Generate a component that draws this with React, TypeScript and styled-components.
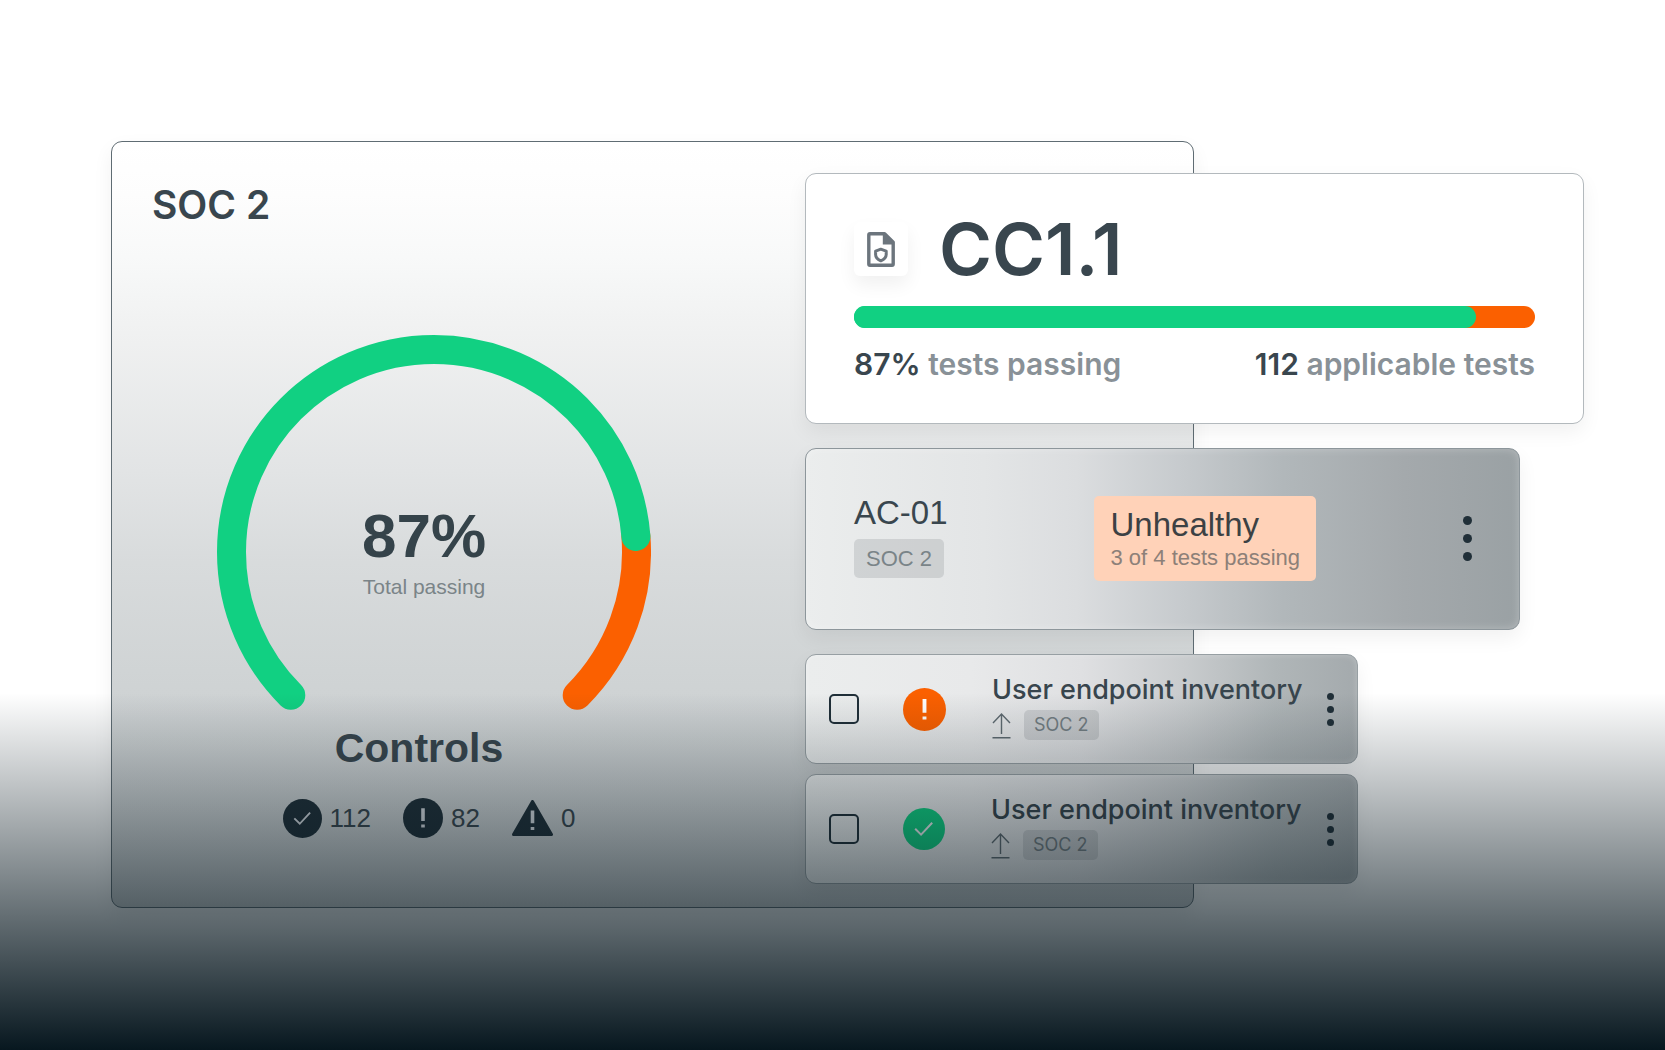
import React from "react";
import styled, { createGlobalStyle } from "styled-components";

const inter = `Inter, "Liberation Sans", sans-serif`;
const grotesk = `"Liberation Sans", Arial, sans-serif`;

const color = {
  ink: "#39464e",
  deep: "#202f38",
  muted: "#899197",
  soft: "#7a8488",
  green: "#11d082",
  orange: "#fb6000",
  line: "#5f6c73",
};

const GlobalStyle = createGlobalStyle`
  *, *::before, *::after { box-sizing: border-box; }
  body { margin: 0; background: #fff; }
  h1, h2, p, ul { margin: 0; padding: 0; font-weight: inherit; }
`;

const Page = styled.main`
  position: relative;
  min-height: 100vh;
  padding: 141px 81px 141px 111px;
  background: #fff;
  color: ${color.ink};
  font-family: ${inter};

  &::after {
    content: "";
    position: absolute;
    inset: 0;
    pointer-events: none;
    background: linear-gradient(180deg, rgba(7, 23, 31, 0) 66%, rgb(7, 23, 31) 100%);
  }
`;

const Stage = styled.div`
  display: grid;
  grid-template-columns: 694fr 389fr 390fr;
`;

const Panel = styled.section`
  grid-area: 1 / 1 / 2 / 3;
  padding: 39px 40px 69px;
  border: 1px solid ${color.line};
  border-radius: 11px;
  background: linear-gradient(
    180deg,
    #ffffff 0%,
    #fdfdfd 7%,
    #f8f9f9 15%,
    #f0f1f1 25%,
    #e2e4e5 43%,
    #d8dbdc 55%,
    #cfd3d4 71%,
    #c9cdcf 100%
  );
  box-shadow: 0 8px 20px rgba(0, 0, 0, 0.06);
`;

const PanelTitle = styled.h1`
  font-size: 39px;
  line-height: 48px;
  font-weight: 600;
`;

const Summary = styled.div`
  width: 434px;
  margin: 106px 0 0 65px;
`;

const Gauge = styled.div`
  display: grid;

  > * {
    grid-area: 1 / 1;
  }
`;

const GaugeLabel = styled.div`
  padding: 169px 20px 0 0;
  font-family: ${grotesk};
  text-align: center;
`;

const GaugeValue = styled.p`
  font-size: 62px;
  line-height: 64px;
  font-weight: 700;
  color: #35434a;
`;

const GaugeCaption = styled.p`
  margin-top: 5px;
  font-size: 21px;
  line-height: 28px;
  color: ${color.soft};
`;

const ControlsTitle = styled.h2`
  margin-top: 13px;
  padding-right: 30px;
  font-family: ${grotesk};
  font-size: 41px;
  line-height: 48px;
  font-weight: 700;
  text-align: center;
`;

const Counts = styled.ul`
  display: flex;
  justify-content: center;
  gap: 32px;
  margin-top: 26px;
  padding-right: 10px;
  list-style: none;
`;

const Count = styled.li`
  display: flex;
  align-items: center;
  gap: 8px;
  font-family: ${grotesk};
  font-size: 26px;
  line-height: 40px;
`;

const Stack = styled.div`
  grid-area: 1 / 2 / 2 / 4;
  display: flex;
  flex-direction: column;
  gap: 24px;
  padding-top: 32px;
`;

const Card = styled.article`
  border: 1px solid #b3b9bd;
  border-radius: 11px;
  background: #fff;
  box-shadow: 0 8px 20px rgba(0, 0, 0, 0.06);
`;

const CriteriaCard = styled(Card)`
  padding: 48px 48px 41px;
`;

const CriteriaHead = styled.header`
  display: flex;
  align-items: center;
  gap: 31px;
  height: 54px;
`;

const IconTile = styled.span`
  display: grid;
  place-items: center;
  width: 54px;
  height: 54px;
  border-radius: 6px;
  background: #fff;
  box-shadow: 0 9px 18px rgba(0, 0, 0, 0.06);
`;

const CriteriaTitle = styled.h2`
  font-size: 72px;
  line-height: 54px;
  font-weight: 600;
`;

const Track = styled.div`
  height: 22px;
  margin-top: 30px;
  border-radius: 11px;
  background: linear-gradient(90deg, ${color.green} 50%, ${color.orange} 50%);
`;

const Fill = styled.div`
  height: 100%;
  border-radius: 11px;
  background: ${color.green};
`;

const Legend = styled.div`
  display: flex;
  justify-content: space-between;
  margin-top: 18px;
  font-size: 30px;
  line-height: 36px;
  font-weight: 600;
  color: ${color.muted};

  b {
    font-weight: 600;
    color: ${color.ink};
  }
`;

const ControlCard = styled(Card)`
  display: flex;
  align-items: center;
  justify-content: space-between;
  width: calc(100% - 64px);
  padding: 47px 47px 48px 48px;
  border-color: #8d969b;
  background: linear-gradient(
    90deg,
    #ebeded 0%,
    #e3e5e6 25%,
    #dbdddf 38%,
    #c6cacd 53%,
    #b1b7ba 67%,
    #a4a9ac 84%,
    #9aa1a4 100%
  );
  box-shadow: 0 8px 20px rgba(0, 0, 0, 0.06), inset 0 0 8px rgba(255, 255, 255, 0.28);
`;

const ControlName = styled.p`
  font-family: ${grotesk};
  font-size: 33px;
  line-height: 32px;
`;

const Tag = styled.span<{ $large?: boolean }>`
  display: inline-block;
  padding: ${(p) => (p.$large ? "0 12px" : "0 10px")};
  border-radius: 5px;
  background: rgba(32, 40, 46, 0.12);
  color: ${(p) => (p.$large ? "#7a8488" : "#737d82")};
  font-family: ${(p) => (p.$large ? grotesk : inter)};
  font-size: ${(p) => (p.$large ? 22 : 18)}px;
  line-height: ${(p) => (p.$large ? 39 : 30)}px;
`;

const ControlId = styled.div`
  display: flex;
  flex-direction: column;
  align-items: flex-start;
  gap: 10px;
  margin-bottom: 3px;
`;

const Health = styled.div`
  padding: 11px 16px 10px;
  border-radius: 5px;
  background: #ffd2b8;
  font-family: ${grotesk};
`;

const HealthState = styled.p`
  font-size: 33px;
  line-height: 36px;
  color: #3c4144;
`;

const HealthNote = styled.p`
  margin-top: 2px;
  font-size: 22px;
  line-height: 26px;
  color: #8d8078;
`;

const MenuButton = styled.button`
  display: block;
  flex: none;
  padding: 0;
  border: 0;
  background: none;
  cursor: pointer;

  svg {
    display: block;
  }
`;

const Tests = styled.div`
  display: flex;
  flex-direction: column;
  gap: 10px;
  width: calc(100% - 226px);
`;

const TestCard = styled(Card)`
  display: flex;
  align-items: center;
  padding: 18px 23px;
  border-color: #979fa3;
  background: linear-gradient(
    90deg,
    #ebeded 0%,
    #e8e9ea 30%,
    #dfe0e2 50%,
    #c8cbcd 69%,
    #b0b6b8 85%,
    #a4aaad 100%
  );
  box-shadow: 0 8px 20px rgba(0, 0, 0, 0.06), inset 0 0 6px rgba(255, 255, 255, 0.25);
`;

const Check = styled.input`
  appearance: none;
  flex: none;
  width: 30px;
  height: 30px;
  margin: 0;
  border: 2px solid ${color.deep};
  border-radius: 5px;
`;

const StatusSlot = styled.span`
  display: grid;
  flex: none;
  margin: 0 46px 0 44px;
`;

const TestBody = styled.div`
  flex: 1;
  margin-bottom: 5px;
  white-space: nowrap;
`;

const TestName = styled.p`
  font-size: 27px;
  line-height: 34px;
  font-weight: 500;
  color: #38454d;
`;

const TestMeta = styled.div`
  display: flex;
  align-items: center;
  gap: 13px;
  margin-top: 3px;
`;

function Ring({ share }: { share: number }) {
  const arc = "M 73.8 360.2 A 202.5 202.5 0 1 1 360.2 360.2";
  return (
    <svg width="434" height="376" viewBox="0 0 434 376" fill="none" aria-hidden="true">
      <g strokeWidth="29" strokeLinecap="round">
        <path d="M 418.9 201.5 A 202.5 202.5 0 0 1 360.2 360.2" stroke={color.orange} />
        <path d={arc} stroke={color.green} pathLength={100} strokeDasharray={`${share} 200`} />
      </g>
    </svg>
  );
}

function Badge({ kind, fill, mark, size }: { kind: "check" | "alert"; fill: string; mark: string; size: number }) {
  return (
    <svg width={size} height={size} viewBox="0 0 40 40" fill="none" aria-hidden="true">
      <circle cx="20" cy="20" r="20" fill={fill} />
      {kind === "check" ? (
        <path d="M11.6 19.8L17.2 25.4L27.8 14" stroke={mark} strokeWidth="1.9" />
      ) : (
        <path d="M18.2 10.2h3.6v12.8h-3.6zM18.2 26.4h3.6v3h-3.6z" fill={mark} />
      )}
    </svg>
  );
}

function Triangle() {
  return (
    <svg width="41" height="36" viewBox="0 0 41 36" aria-hidden="true">
      <path d="M20.5 1.5L39.5 34.5H1.5Z" fill={color.deep} stroke={color.deep} strokeWidth="3" strokeLinejoin="round" />
      <path d="M18.7 10.5h3.6v12.8h-3.6zM18.7 27h3.6v3h-3.6z" fill="#d9dde2" />
    </svg>
  );
}

function ShieldFile() {
  return (
    <svg width="28" height="35" viewBox="0 0 28 35" fill="none" aria-hidden="true">
      <path
        d="M3 1.8H17.6L26.2 10.2V32Q26.2 33.2 25 33.2H3Q1.8 33.2 1.8 32V3Q1.8 1.8 3 1.8Z"
        stroke="#6c757d"
        strokeWidth="3.4"
        strokeLinejoin="round"
      />
      <path d="M15.8 2V12.4H27V10L18.4 1.6Z" fill="#6c757d" />
      <path
        d="M13.8 17.2L19.2 19.1V22.4C19.2 25.2 17 27.4 13.8 28.8C10.6 27.4 8.6 25.2 8.6 22.4V19.1Z"
        stroke="#6c757d"
        strokeWidth="3"
        strokeLinejoin="round"
      />
    </svg>
  );
}

function Upload() {
  return (
    <svg width="19" height="27" viewBox="0 0 19 27" fill="none" stroke="#5f6a70" strokeWidth="1.4" aria-hidden="true">
      <path d="M9.5 22V2M1 11L9.5 2L18 11M0.5 25.8H18.5" />
    </svg>
  );
}

function Dots({ size, step }: { size: number; step: number }) {
  const r = size / 2;
  const h = size + step * 2;
  return (
    <svg width={size} height={h} viewBox={`0 0 ${size} ${h}`} fill={color.deep} aria-hidden="true">
      {[0, 1, 2].map((i) => (
        <circle key={i} cx={r} cy={r + i * step} r={r} />
      ))}
    </svg>
  );
}

const tests = [
  { id: "test-1", name: "User endpoint inventory", tag: "SOC 2", kind: "alert" as const, fill: color.orange, mark: "#ffffff", size: 43 },
  { id: "test-2", name: "User endpoint inventory", tag: "SOC 2", kind: "check" as const, fill: color.green, mark: "#eef1f2", size: 42 },
];

export default function App() {
  const passing = 91.3;
  return (
    <>
      <GlobalStyle />
      <Page>
        <Stage>
          <Panel>
            <PanelTitle>SOC 2</PanelTitle>
            <Summary>
              <Gauge>
                <Ring share={81.7} />
                <GaugeLabel>
                  <GaugeValue>87%</GaugeValue>
                  <GaugeCaption>Total passing</GaugeCaption>
                </GaugeLabel>
              </Gauge>
              <ControlsTitle>Controls</ControlsTitle>
              <Counts>
                <Count>
                  <Badge kind="check" fill={color.deep} mark="#d9dde2" size={39} />
                  112
                </Count>
                <Count>
                  <Badge kind="alert" fill={color.deep} mark="#d9dde2" size={40} />
                  82
                </Count>
                <Count>
                  <Triangle />
                  0
                </Count>
              </Counts>
            </Summary>
          </Panel>

          <Stack>
            <CriteriaCard>
              <CriteriaHead>
                <IconTile>
                  <ShieldFile />
                </IconTile>
                <CriteriaTitle>CC1.1</CriteriaTitle>
              </CriteriaHead>
              <Track>
                <Fill style={{ width: `${passing}%` }} />
              </Track>
              <Legend>
                <span>
                  <b>87%</b> tests passing
                </span>
                <span>
                  <b>112</b> applicable tests
                </span>
              </Legend>
            </CriteriaCard>

            <ControlCard>
              <ControlId>
                <ControlName>AC-01</ControlName>
                <Tag $large>SOC 2</Tag>
              </ControlId>
              <Health>
                <HealthState>Unhealthy</HealthState>
                <HealthNote>3 of 4 tests passing</HealthNote>
              </Health>
              <MenuButton type="button" aria-label="Control options">
                <Dots size={9} step={18} />
              </MenuButton>
            </ControlCard>

            <Tests>
              {tests.map((t) => (
                <TestCard key={t.id}>
                  <Check type="checkbox" id={t.id} aria-label={t.name} />
                  <StatusSlot>
                    <Badge kind={t.kind} fill={t.fill} mark={t.mark} size={t.size} />
                  </StatusSlot>
                  <TestBody>
                    <TestName>{t.name}</TestName>
                    <TestMeta>
                      <Upload />
                      <Tag>{t.tag}</Tag>
                    </TestMeta>
                  </TestBody>
                  <MenuButton type="button" aria-label="Test options">
                    <Dots size={7} step={13} />
                  </MenuButton>
                </TestCard>
              ))}
            </Tests>
          </Stack>
        </Stage>
      </Page>
    </>
  );
}
